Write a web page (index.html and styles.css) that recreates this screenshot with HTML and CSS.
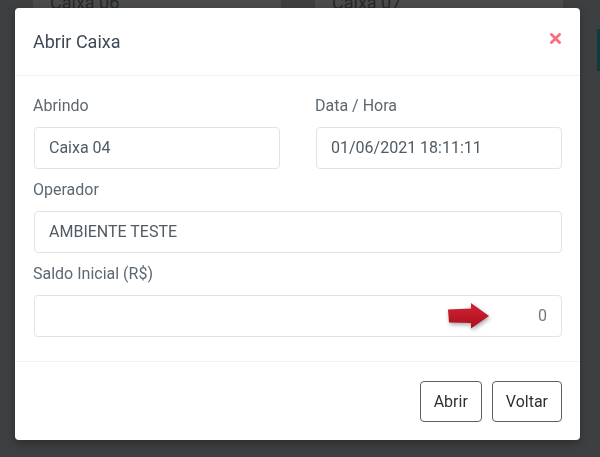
FILE: index.html
```html
<!DOCTYPE html>
<html>
<head>
    <meta charset="utf-8" />
    <title>Abrir Caixa</title>
    <link rel="stylesheet" href="styles.css">
</head>
<body>
    <div class="pagina">
        <div class="caixas">
            <div class="caixa">Caixa 06</div>
            <div class="caixa">Caixa 07</div>
        </div>
        <div class="lateral"></div>
    </div>

    <div class="fundo">
        <div class="modal">
            <div class="modal-topo">
                <h4 class="modal-titulo">Abrir Caixa</h4>
                <button class="fechar" type="button">
                    <svg width="11" height="11" viewBox="0 0 11 11">
                        <path d="M1.5 1.5 L9.5 9.5 M9.5 1.5 L1.5 9.5" stroke="#f7707f" stroke-width="2.8" stroke-linecap="square" />
                    </svg>
                </button>
            </div>
            <form class="modal-corpo">
                <div class="linha">
                    <div class="grupo">
                        <label>Abrindo</label>
                        <div class="campo">Caixa 04</div>
                    </div>
                    <div class="grupo">
                        <label>Data / Hora</label>
                        <div class="campo">01/06/2021 18:11:11</div>
                    </div>
                </div>
                <div class="grupo">
                    <label>Operador</label>
                    <div class="campo">AMBIENTE TESTE</div>
                </div>
                <div class="grupo">
                    <label>Saldo Inicial (R$)</label>
                    <div class="campo valor">
                        <svg class="seta" width="46" height="32" viewBox="0 0 46 32">
                            <defs>
                                <linearGradient id="vermelho" x1="0" y1="0" x2="0" y2="1">
                                    <stop offset="0" stop-color="#d42232" />
                                    <stop offset="1" stop-color="#a8101e" />
                                </linearGradient>
                            </defs>
                            <polygon points="1,7.5 24,6.5 24,1 42,14 24,26.5 24,21 2,20.5" fill="url(#vermelho)" />
                        </svg>
                        0
                    </div>
                </div>
            </form>
            <div class="modal-rodape">
                <button class="botao" type="button">Abrir</button>
                <button class="botao" type="button">Voltar</button>
            </div>
        </div>
    </div>
</body>
</html>
```

FILE: styles.css
```css
* {
    box-sizing: border-box;
}

html, body {
    margin: 0;
    height: 100%;
}

body {
    font-family: Roboto, "Liberation Sans", sans-serif;
    background-color: #3d3f40;
    overflow: hidden;
}

.pagina {
    display: flex;
    justify-content: space-between;
}

.caixas {
    display: flex;
    gap: 34px;
    margin: -14px 0 0 33px;
}

.caixa {
    width: 248px;
    height: 40px;
    padding: 0 17px;
    background-color: #4a4b4b;
    color: #262829;
    font-size: 18px;
    line-height: 34px;
}

.lateral {
    width: 3px;
    height: 42px;
    margin-top: 29px;
    background-color: #0f3a3e;
}

.fundo {
    position: fixed;
    top: 0;
    left: 0;
    right: 0;
    bottom: 0;
    padding: 8px 20px 0 15px;
}

.modal {
    width: 565px;
    height: 432px;
    background-color: #fff;
    border-radius: 4px;
    display: flex;
    flex-direction: column;
    box-shadow: 0 3px 8px rgba(0, 0, 0, 0.3);
}

.modal-topo {
    height: 68px;
    padding: 0 18px;
    display: flex;
    align-items: center;
    justify-content: space-between;
    border-bottom: 1px solid #eff1f3;
}

.modal-titulo {
    margin: 0;
    font-size: 18px;
    font-weight: 400;
    line-height: 27px;
    color: #3d4955;
    margin-top: -1px;
}

.fechar {
    border: none;
    background: none;
    padding: 0;
    margin: -6px 1px 0 0;
    width: 11px;
    height: 11px;
    display: flex;
}

.modal-corpo {
    flex: 1;
    padding: 18px 18px 0 18px;
    display: flex;
    flex-direction: column;
    gap: 9px;
}

.linha {
    display: grid;
    grid-template-columns: 1fr 1fr;
    column-gap: 35px;
}

.grupo label {
    display: block;
    font-size: 16px;
    line-height: 24px;
    color: #5e6871;
    margin-bottom: 9px;
}

.campo {
    height: 42px;
    border: 1px solid #dfe2e6;
    border-radius: 4px;
    padding: 0 14px;
    font-size: 16px;
    line-height: 40px;
    color: #4f5b65;
    margin-left: 1px;
}

.valor {
    position: relative;
    text-align: right;
    color: #737a80;
}

.seta {
    position: absolute;
    left: 412px;
    top: 6px;
    filter: drop-shadow(1px 2px 2px rgba(0, 0, 0, 0.35));
}

.modal-rodape {
    height: 79px;
    border-top: 1px solid #eff1f3;
    padding: 0 18px 0 18px;
    display: flex;
    justify-content: flex-end;
    align-items: center;
    gap: 10px;
}

.botao {
    height: 41px;
    padding: 0 13px;
    border: 1px solid #5c5f62;
    border-radius: 4px;
    background-color: #fff;
    font-family: Roboto, "Liberation Sans", sans-serif;
    font-size: 16px;
    color: #2f3133;
    margin-top: 1px;
}
```
